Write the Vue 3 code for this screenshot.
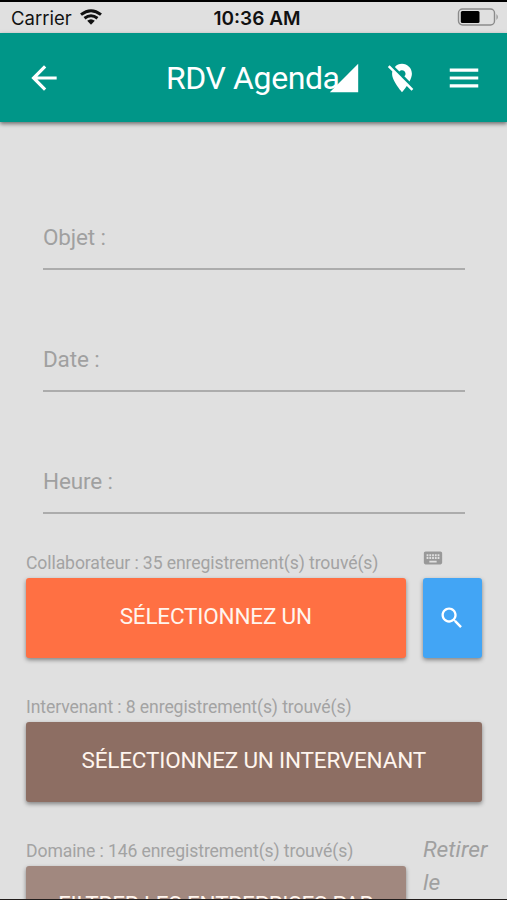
<script setup>
const fields = ['Objet :', 'Date :', 'Heure :']
</script>

<template>
  <div class="screen">
    <div class="status">
      <div class="carrier">
        <span>Carrier</span>
        <svg class="wifi" viewBox="0 0 22 16">
          <g fill="none" stroke="#111" stroke-width="3">
            <path d="M1 5.6Q11-2.2 21 5.6" />
            <path d="M4.5 9.3Q11 4.200 17.500 9.3" />
          </g>
          <path fill="#111" d="M7.200 11.700Q11 8.700 14.800 11.700L11 15.700z" />
        </svg>
      </div>
      <div class="time">10:36 AM</div>
      <svg class="battery" viewBox="0 0 42 18">
        <rect x="1.500" y="1" width="36" height="16" rx="4" fill="none" stroke="#8b8b8b" stroke-width="1.400" />
        <rect x="3.800" y="3" width="18.700" height="12" rx="1.500" fill="#000" />
        <path d="M39.500 6q2.500 3 0 6z" fill="#8b8b8b" />
      </svg>
    </div>

    <header class="bar">
      <svg class="back" viewBox="0 0 24 24"><path d="M20 11H7.830l5.590-5.590L12 4l-8 8 8 8 1.410-1.410L7.830 13H20v-2z" /></svg>
      <h1>RDV Agenda</h1>
      <svg class="signal" viewBox="0 0 24 24"><path d="M2 22h20V2z" /></svg>
      <svg class="locoff" viewBox="0 0 24 24"><path d="M12 6.500c1.380 0 2.500 1.120 2.500 2.500 0 .74-.33 1.390-.83 1.850l3.630 3.630c.98-1.860 1.700-3.800 1.700-5.480 0-3.870-3.130-7-7-7-1.980 0-3.760.83-5.040 2.150l3.190 3.190c.46-.52 1.110-.84 1.850-.84zm4.370 9.600l-4.630-4.630-.11-.11L3.270 3 2 4.270l3.180 3.180C5.070 7.950 5 8.470 5 9c0 5.250 7 13 7 13s1.670-1.850 3.380-4.350L18.730 21 20 19.730l-3.630-3.630z" /></svg>
      <svg class="menu" viewBox="0 0 24 24"><path d="M3 18h18v-2H3v2zm0-5h18v-2H3v2zm0-7v2h18V6H3z" /></svg>
    </header>

    <main>
      <div class="fields">
        <label v-for="f in fields" :key="f" class="field"><span>{{ f }}</span></label>
      </div>

      <section class="row">
        <div class="main-col">
          <p class="caption">Collaborateur : 35 enregistrement(s) trouvé(s)</p>
          <div class="btn orange"><span>SÉLECTIONNEZ UN</span></div>
        </div>
        <div class="side-col">
          <div class="kbd-slot">
            <svg class="kbd" viewBox="0 0 24 24"><path d="M20 5H4c-1.100 0-1.990.9-1.990 2L2 17c0 1.100.9 2 2 2h16c1.100 0 2-.9 2-2V7c0-1.100-.9-2-2-2zm-9 3h2v2h-2V8zm0 3h2v2h-2v-2zM8 8h2v2H8V8zm0 3h2v2H8v-2zm-1 2H5v-2h2v2zm0-3H5V8h2v2zm9 7H8v-2h8v2zm0-4h-2v-2h2v2zm0-3h-2V8h2v2zm3 3h-2v-2h2v2zm0-3h-2V8h2v2z" /></svg>
          </div>
          <div class="btn blue">
            <svg class="search" viewBox="0 0 24 24"><path d="M15.500 14h-.79l-.28-.27C15.410 12.590 16 11.110 16 9.500 16 5.910 13.090 3 9.500 3S3 5.910 3 9.500 5.910 16 9.500 16c1.610 0 3.090-.59 4.230-1.570l.27.28v.79l5 4.990L20.490 19l-4.990-5zm-6 0C7.010 14 5 11.990 5 9.500S7.010 5 9.500 5 14 7.010 14 9.500 11.990 14 9.500 14z" /></svg>
          </div>
        </div>
      </section>

      <section class="row">
        <div class="full-col">
          <p class="caption">Intervenant : 8 enregistrement(s) trouvé(s)</p>
          <div class="btn brown"><span>SÉLECTIONNEZ UN INTERVENANT</span></div>
        </div>
      </section>

      <section class="row">
        <div class="main-col">
          <p class="caption">Domaine : 146 enregistrement(s) trouvé(s)</p>
          <div class="btn taupe"><span>FILTRER LES ENTREPRISES PAR</span></div>
        </div>
        <div class="side-col remove">Retirer<br />le</div>
      </section>
    </main>
  </div>
</template>

<style>
body {
  margin: 0;
  overflow: hidden;
}
</style>

<style scoped>
.screen {
  box-sizing: border-box;
  width: 507px;
  height: 900px;
  overflow: hidden;
  display: flex;
  flex-direction: column;
  border-top: 2px solid #000;
  border-bottom: 1px solid #211d1c;
  background: #e0e0e0;
  font-family: Roboto, "Liberation Sans", sans-serif;
}
.status {
  flex: none;
  height: 31px;
  display: grid;
  grid-template-columns: 1fr auto 1fr;
  align-items: center;
  padding: 0 8px 0 11px;
  font-family: Inter, sans-serif;
  color: #111;
}
.carrier {
  display: flex;
  align-items: center;
  font-size: 18.500px;
  line-height: 30px;
}
.wifi {
  width: 22px;
  height: 16px;
  margin-left: 8.500px;
  margin-bottom: 1px;
}
.time {
  margin-left: 4px;
  padding-top: 1px;
  font-size: 19px;
  font-weight: 600;
}
.battery {
  width: 42px;
  height: 18px;
  margin-bottom: 1px;
  justify-self: end;
}
.bar {
  flex: none;
  height: 89px;
  box-sizing: border-box;
  display: flex;
  align-items: center;
  padding-left: 24.500px;
  background: #009688;
  box-shadow: 0 2px 4px rgba(0, 0, 0, 0.5);
}
.bar svg {
  flex: none;
  fill: #fff;
}
.back,
.menu {
  width: 38px;
  height: 38px;
}
.signal,
.locoff {
  width: 34px;
  height: 34px;
}
h1 {
  flex: none;
  width: 161px;
  margin: 0 0 0 103.500px;
  color: #fff;
  font-size: 32px;
  font-weight: 400;
  letter-spacing: -0.400px;
  line-height: 40px;
  white-space: nowrap;
}
.locoff {
  margin-left: 24px;
}
.menu {
  margin-left: 25.500px;
}
main {
  flex: none;
  padding: 72px 25.500px 0 26px;
}
.fields {
  padding: 0 16.500px 0 17px;
}
.field {
  box-sizing: border-box;
  display: flex;
  align-items: center;
  height: 76px;
  margin-bottom: 46px;
  padding-top: 12px;
  border-bottom: 2px solid #acacac;
  color: #a0a0a0;
  font-size: 22.500px;
  letter-spacing: -0.150px;
}
.field:last-child {
  margin-bottom: 0;
}
.row {
  display: flex;
  gap: 17px;
  height: 144px;
}
.fields + .row {
  margin-top: 34px;
}
.main-col {
  flex: none;
  width: 379.500px;
}
.side-col {
  flex: none;
  width: 59px;
}
.full-col {
  width: 100%;
}
.caption {
  margin: 0;
  height: 30px;
  line-height: 30px;
  font-size: 17.600px;
  letter-spacing: -0.100px;
  color: #a3a3a3;
  white-space: nowrap;
}
.btn {
  height: 79.500px;
  display: flex;
  align-items: center;
  justify-content: center;
  border-radius: 3px;
  box-shadow: 0 2px 4px rgba(0, 0, 0, 0.42);
  color: #fff5ee;
  font-size: 22.500px;
  letter-spacing: -0.190px;
  white-space: nowrap;
}
.btn span {
  padding-bottom: 3px;
}
.orange {
  background: #ff7043;
}
.blue {
  background: #42a5f5;
}
.brown {
  background: #8d6e63;
}
.taupe {
  background: #a1887f;
}
.kbd-slot {
  display: flow-root;
  height: 30px;
}
.kbd {
  display: block;
  width: 22px;
  height: 22px;
  margin: -1px 0 0 -1px;
  fill: #999;
}
.search {
  width: 28px;
  height: 28px;
  margin-right: 1px;
  fill: #fff;
}
.remove {
  margin-top: -3px;
  padding-left: 0.500px;
  color: #a0a0a0;
  font-size: 22.800px;
  font-style: italic;
  line-height: 33px;
}
</style>
